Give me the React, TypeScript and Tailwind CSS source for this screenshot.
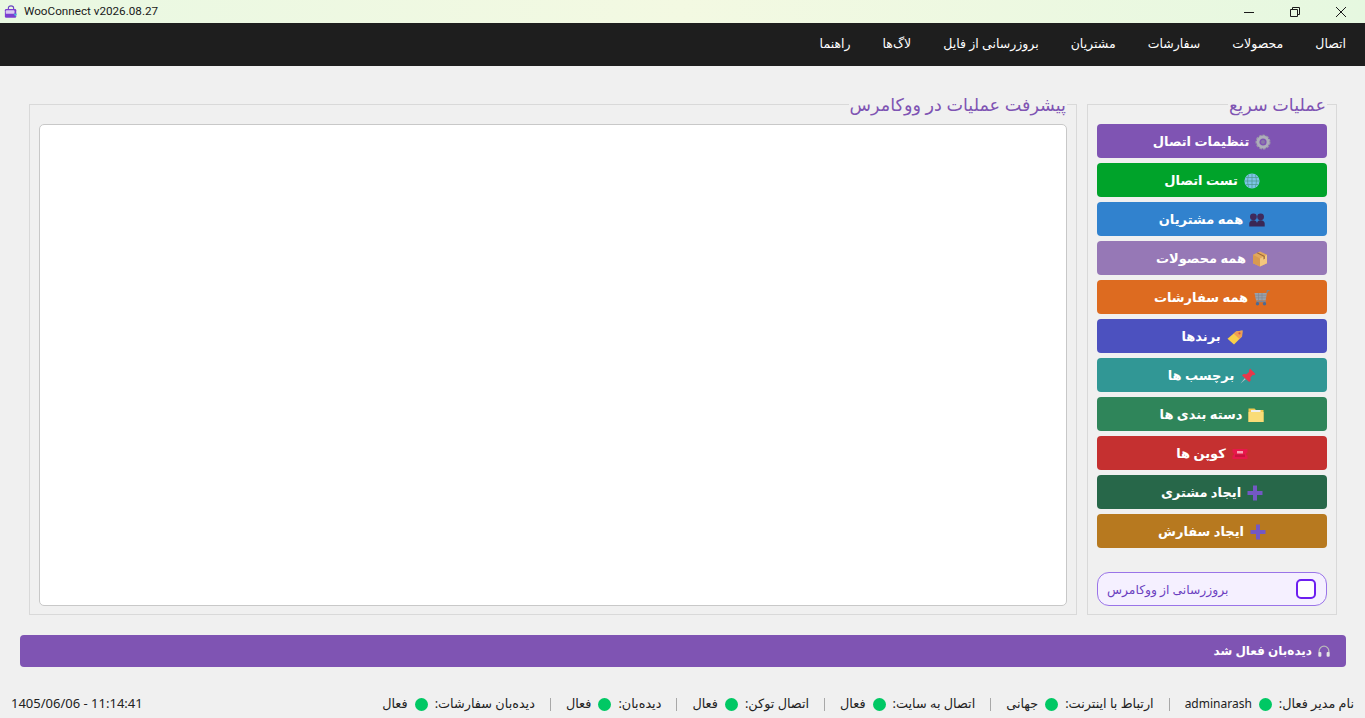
import type { ReactNode } from 'react'

const navItems = ['اتصال', 'محصولات', 'سفارشات', 'مشتریان', 'بروزرسانی از فایل', 'لاگ‌ها', 'راهنما']

const GearIcon = () => (
  <svg viewBox="0 0 16 16" className="w-[16px] h-[16px]">
    <circle cx="8" cy="8" r="6" fill="none" stroke="#9a9aa8" strokeWidth="3" strokeDasharray="2.400 1" />
    <circle cx="8" cy="8" r="5" fill="none" stroke="#aeaeba" strokeWidth="2.800" />
    <circle cx="8" cy="8" r="2" fill="#8a78a8" />
  </svg>
)

const GlobeIcon = () => (
  <svg viewBox="0 0 16 16" className="w-[16px] h-[16px]">
    <circle cx="8" cy="8" r="7.600" fill="#7cc4e8" />
    <path d="M1 8h14M2 4.500h12M2 11.500h12M8 1v14M4.800 1.800c-1.600 3.600-1.600 8.800 0 12.400M11.200 1.800c1.600 3.600 1.600 8.800 0 12.400" fill="none" stroke="#4a9a8c" strokeWidth="0.700" />
  </svg>
)

const BustsIcon = () => (
  <svg viewBox="0 0 16 16" className="w-[16px] h-[16px]">
    <circle cx="4.400" cy="4.800" r="3.400" fill="#3f2a5c" />
    <circle cx="11.600" cy="4.800" r="3.400" fill="#3f2a5c" />
    <path d="M0.300 14.500v-3c0-2 1.600-3.300 4.100-3.300s3.600 1.300 3.600 3.300c0-2 1.100-3.300 3.600-3.300s4.100 1.300 4.100 3.300v3z" fill="#3a2755" />
  </svg>
)

const BoxIcon = () => (
  <svg viewBox="0 0 16 16" className="w-[16px] h-[16px]">
    <path d="M8 .5l7 3.200v8.600L8 15.500l-7-3.200V3.700z" fill="#e3a85c" />
    <path d="M8 7.500L15 3.700v8.600L8 15.500z" fill="#f4c67e" />
    <path d="M1 3.700L8 7.500v8L1 12.300z" fill="#d99a4e" />
    <path d="M4.500 2.100l7 3.500v2.800l1.300-.7V4.900L5.800 1.500z" fill="#9c6836" />
  </svg>
)

const CartIcon = () => (
  <svg viewBox="0 0 16 16" className="w-[16px] h-[16px]">
    <path d="M.5 3h12.300l-1.100 7.500H2.100z" fill="#9aa1ab" />
    <path d="M1 5.200h11.500M1.500 7.800h10.600M4.500 3v7.500M8 3v7.500" stroke="#7d8590" strokeWidth="0.600" fill="none" />
    <path d="M11.800 11.500H2.500M12.800 3l.7-2.300h2" stroke="#7c8794" strokeWidth="1.300" fill="none" />
    <circle cx="3.500" cy="13.800" r="1.700" fill="#4a6a96" />
    <circle cx="10.500" cy="13.800" r="1.700" fill="#4a6a96" />
  </svg>
)

const TagIcon = () => (
  <svg viewBox="0 0 16 16" className="w-[16px] h-[16px]">
    <path d="M9 2.500L15.500 1.500 15 7.500l-8 8L.5 9.800z" fill="#f7cf4a" />
    <path d="M9 2.500L15.500 1.500 15 7.500l-2.500 2.500-5.800-5.200z" fill="#ee9f52" />
    <circle cx="12.500" cy="4.300" r="1.100" fill="#d4574a" />
  </svg>
)

const PinIcon = () => (
  <svg viewBox="0 0 16 16" className="w-[16px] h-[16px]">
    <path d="M10 .5l5.500 5.500-1.600 1.200-1-.4-2.500 2.800.3 3-1.500 1.500L2 7.500l1.500-1.500 3 .3 2.800-2.600-.4-1z" fill="#e8374a" />
    <path d="M4.700 10.300L.5 15.500l5.200-4.200z" fill="#b9c0c8" />
  </svg>
)

const FolderIcon = () => (
  <svg viewBox="0 0 16 16" className="w-[16px] h-[16px]">
    <path d="M.5 1.500h6l1.500 1.500h7.500v12H.500z" fill="#f3c94f" />
    <path d="M.5 5h15v10H.500z" fill="#f9dc78" />
    <path d="M3 3h9.500v2H3z" fill="#eeeeee" />
  </svg>
)

const TicketIcon = () => (
  <svg viewBox="0 0 16 16" className="w-[16px] h-[16px]">
    <path d="M.5 3h15v3.500a1.500 1.500 0 000 3V13H.500V9.500a1.500 1.500 0 000-3z" fill="#e8174a" />
    <rect x="5" y="5" width="6" height="2.500" fill="#f7a0b4" />
    <rect x="3" y="8.500" width="10" height="2.500" fill="#c9123e" />
  </svg>
)

const PlusIcon = () => (
  <svg viewBox="0 0 16 16" className="w-[16px] h-[16px]">
    <path d="M6 .5h4v5.500h5.500v4H10v5.500H6V10H.500V6H6z" fill="#7358c4" />
  </svg>
)

const actions: { label: string; color: string; icon: ReactNode }[] = [
  { label: 'تنظیمات اتصال', color: 'bg-[#7f54b3]', icon: <GearIcon /> },
  { label: 'تست اتصال', color: 'bg-[#00a32a]', icon: <GlobeIcon /> },
  { label: 'همه مشتریان', color: 'bg-[#3182ce]', icon: <BustsIcon /> },
  { label: 'همه محصولات', color: 'bg-[#9678b6]', icon: <BoxIcon /> },
  { label: 'همه سفارشات', color: 'bg-[#dd6b20]', icon: <CartIcon /> },
  { label: 'برندها', color: 'bg-[#4c51bf]', icon: <TagIcon /> },
  { label: 'برچسب ها', color: 'bg-[#319795]', icon: <PinIcon /> },
  { label: 'دسته بندی ها', color: 'bg-[#2f855a]', icon: <FolderIcon /> },
  { label: 'کوپن ها', color: 'bg-[#c53030]', icon: <TicketIcon /> },
  { label: 'ایجاد مشتری', color: 'bg-[#276749]', icon: <PlusIcon /> },
  { label: 'ایجاد سفارش', color: 'bg-[#b7791f]', icon: <PlusIcon /> },
]

const statuses = [
  { label: 'نام مدیر فعال:', value: 'adminarash' },
  { label: 'ارتباط با اینترنت:', value: 'جهانی' },
  { label: 'اتصال به سایت:', value: 'فعال' },
  { label: 'اتصال توکن:', value: 'فعال' },
  { label: 'دیده‌بان:', value: 'فعال' },
  { label: 'دیده‌بان سفارشات:', value: 'فعال' },
]

function GroupBox({ title, className, children }: { title: string; className: string; children: ReactNode }) {
  return (
    <section className={`relative border border-[#d9d9d9] p-[9px] pt-[19px] flex flex-col ${className}`}>
      <h2 className="absolute top-[-13px] right-[9px] bg-[#f0f0f0] px-px text-[17.600px] leading-[24px] text-[#7f54b3]">
        {title}
      </h2>
      {children}
    </section>
  )
}

export default function App() {
  return (
    <div
      dir="rtl"
      className="h-[718px] w-[1365px] overflow-hidden flex flex-col bg-[#f0f0f0] text-[13px] font-['Noto_Sans','DejaVu_Sans',sans-serif]"
    >
      {/* Title bar */}
      <div dir="ltr" className="h-[23px] shrink-0 flex items-center bg-gradient-to-r from-[#e9f8e2] via-[#f3f9e2] to-[#e6f8e0]">
        <svg viewBox="0 0 16 16" className="w-[14px] h-[14px] ml-[4px] mr-[6px]">
          <path d="M5 5V3.500C5 2 6 1 8 1s3 1 3 2.500V5" fill="none" stroke="#6b46c1" strokeWidth="1.300" />
          <rect x="1" y="4.500" width="13" height="10" rx="1.500" fill="#7c3fd0" />
          <rect x="2" y="6" width="10" height="4" rx="1" fill="#d9c7f2" />
          <path d="M11 10h4l-2 3z" fill="#3fb8d8" />
        </svg>
        <span className="font-['Roboto',sans-serif] text-[11.700px] text-[#1a1a1a]">WooConnect v2026.08.27</span>
        <div className="ml-auto flex items-center text-[#1a1a1a]">
          <svg viewBox="0 0 12 12" className="w-[12px] h-[12px] mr-[34px]">
            <path d="M1 6.500h10" stroke="currentColor" strokeWidth="1" />
          </svg>
          <svg viewBox="0 0 12 12" className="w-[12px] h-[12px] mr-[34px]">
            <path d="M1.500 3.500h7v7h-7zM3.500 3.500V1.500h7v7h-2" fill="none" stroke="currentColor" strokeWidth="1" />
          </svg>
          <svg viewBox="0 0 12 12" className="w-[12px] h-[12px] mr-[18px]">
            <path d="M1 1l10 10M11 1L1 11" stroke="currentColor" strokeWidth="1" />
          </svg>
        </div>
      </div>

      {/* Menu */}
      <nav className="h-[43px] shrink-0 bg-[#1e1e1e] flex items-center gap-[32px] pr-[19px] text-[12.500px] text-white">
        {navItems.map((item) => (
          <span key={item}>{item}</span>
        ))}
      </nav>

      {/* Panels */}
      <main className="h-[511px] mt-[38px] mr-[28px] ml-[29px] flex gap-[10px] shrink-0">
        <GroupBox title="عملیات سریع" className="w-[250px] shrink-0">
          <div className="flex flex-col gap-[5px]">
            {actions.map((a) => (
              <button
                key={a.label}
                className={`h-[34px] pt-px rounded-[4px] flex items-center justify-center gap-[6px] text-[13px] font-bold text-white ${a.color}`}
              >
                {a.icon}
                <span>{a.label}</span>
              </button>
            ))}
          </div>
          <label className="mt-auto mb-[-1px] h-[34px] rounded-[12px] border border-[#9a74e8] bg-[#f5f0ff] flex items-center justify-between pl-[9px] pr-[10px] text-[12.300px] text-[#6b3fc0]">
            <span className="w-[20px] h-[20px] rounded-[5px] border-2 border-[#6d1ff0] bg-white" />
            <span className="pt-[3px]">بروزرسانی از ووکامرس</span>
          </label>
        </GroupBox>

        <GroupBox title="پیشرفت عملیات در ووکامرس" className="flex-1">
          <div className="flex-1 mb-[-1px] rounded-[5px] border border-[#c8c8c8] bg-white" />
        </GroupBox>
      </main>

      {/* Watcher banner */}
      <div className="h-[32px] mt-[20px] ml-[20px] mr-[19px] shrink-0 rounded-[4px] bg-[#7f54b3] flex items-center gap-[5px] pr-[15px] text-[12px] font-bold text-white">
        <svg viewBox="0 0 16 16" className="w-[14px] h-[14px]">
          <path d="M2.500 10V8a5.500 5.500 0 0111 0v2" fill="none" stroke="#b9b9b9" strokeWidth="1.500" />
          <rect x="1.500" y="9" width="3.500" height="5.500" rx="1.200" fill="#e4e4e4" />
          <rect x="11" y="9" width="3.500" height="5.500" rx="1.200" fill="#e4e4e4" />
        </svg>
        <span>دیده‌بان فعال شد</span>
      </div>

      {/* Status bar */}
      <footer className="mt-auto h-[28px] shrink-0 flex items-center justify-between px-[11px] text-[13px] text-[#222222]">
        <div className="flex items-center text-[12.800px]">
          {statuses.map((s, i) => (
            <div key={s.label} className="flex items-center">
              {i > 0 && <span className="w-px h-[13px] bg-[#a8a8a8] mx-[15px]" />}
              <span>{s.label}</span>
              <span className="w-[13px] h-[13px] rounded-full bg-[#00c864] mx-[7px]" />
              <span className={i === 0 ? 'text-[12px]' : ''}>{s.value}</span>
            </div>
          ))}
        </div>
        <span dir="ltr">1405/06/06 - 11:14:41</span>
      </footer>
    </div>
  )
}
